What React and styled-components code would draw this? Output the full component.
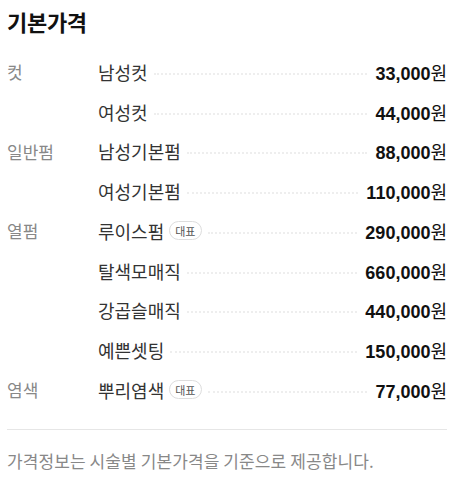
import React from 'react';
import styled, { createGlobalStyle } from 'styled-components';

const GlobalStyle = createGlobalStyle`
  html, body {
    margin: 0;
    padding: 0;
    background: #fff;
  }
  body {
    font-family: "Noto Sans CJK KR", "Noto Sans", sans-serif;
  }
`;

const Wrapper = styled.section`
  padding: 6px 8px 0 7px;
  width: 455px;
  box-sizing: border-box;
`;

const Title = styled.h2`
  margin: 0;
  font-size: 22px;
  line-height: 30px;
  font-weight: 700;
  color: #111;
  letter-spacing: -0.3px;
`;

const List = styled.div`
  margin-top: 16px;
  display: flex;
  flex-direction: column;
`;

const Row = styled.div`
  display: grid;
  grid-template-columns: 91px 1fr;
  align-items: center;
  height: 39.75px;
`;

const Category = styled.div`
  font-size: 17px;
  color: #888;
`;

const Item = styled.div`
  display: flex;
  align-items: center;
  min-width: 0;
`;

const Name = styled.span`
  font-size: 18px;
  color: #333;
  white-space: nowrap;
`;

const Badge = styled.span`
  margin-left: 5px;
  display: inline-flex;
  align-items: center;
  height: 19px;
  padding: 0 5px;
  border: 1px solid #ddd;
  border-radius: 10px;
  font-size: 11px;
  color: #555;
  box-sizing: border-box;
`;

const Dots = styled.span`
  flex: 1;
  margin: 4px 8px 0 6px;
  border-bottom: 2px dotted #eee;
`;

const Price = styled.span`
  display: flex;
  align-items: baseline;
  white-space: nowrap;
  color: #111;
`;

const Amount = styled.span`
  font-family: "Liberation Sans", Arial, sans-serif;
  font-weight: 700;
  font-size: 18px;
`;

const Won = styled.span`
  font-size: 18px;
`;

const Divider = styled.hr`
  margin: 19px 0 0;
  border: 0;
  border-top: 1px solid #e6e6e6;
`;

const Note = styled.p`
  margin: 0;
  padding-top: 19px;
  font-size: 17px;
  line-height: 24px;
  letter-spacing: 0.1px;
  color: #888;
`;

const prices = [
  { category: '컷', name: '남성컷', price: '33,000' },
  { category: '', name: '여성컷', price: '44,000' },
  { category: '일반펌', name: '남성기본펌', price: '88,000' },
  { category: '', name: '여성기본펌', price: '110,000' },
  { category: '열펌', name: '루이스펌', price: '290,000', main: true },
  { category: '', name: '탈색모매직', price: '660,000' },
  { category: '', name: '강곱슬매직', price: '440,000' },
  { category: '', name: '예쁜셋팅', price: '150,000' },
  { category: '염색', name: '뿌리염색', price: '77,000', main: true },
];

export default function App() {
  return (
    <>
      <GlobalStyle />
      <Wrapper>
        <Title>기본가격</Title>
        <List>
          {prices.map((p, i) => (
            <Row key={i}>
              <Category>{p.category}</Category>
              <Item>
                <Name>{p.name}</Name>
                {p.main && <Badge>대표</Badge>}
                <Dots />
                <Price>
                  <Amount>{p.price}</Amount>
                  <Won>원</Won>
                </Price>
              </Item>
            </Row>
          ))}
        </List>
        <Divider />
        <Note>가격정보는 시술별 기본가격을 기준으로 제공합니다.</Note>
      </Wrapper>
    </>
  );
}
